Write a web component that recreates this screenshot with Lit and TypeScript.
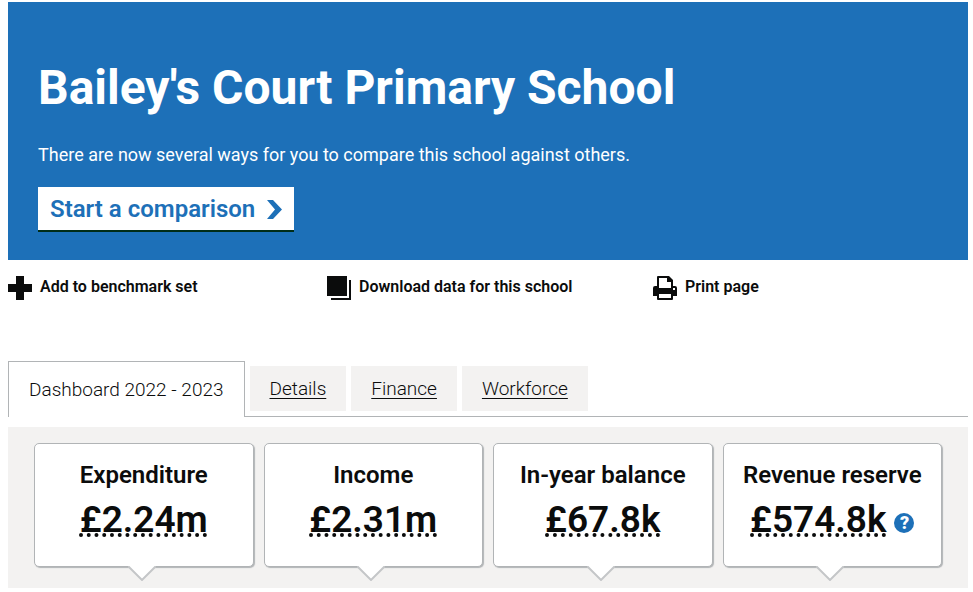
import { LitElement, html, css, svg } from "lit";

const actionIcons = {
  plus: svg`<path d="M8 0h8v8h8v8h-8v8H8v-8H0V8h8z"/>`,
  copy: svg`<path d="M0 0h20v20H0zM22 4h2v20H4v-2h18z"/>`,
  print: svg`<path fill-rule="evenodd" d="M5 0h11l4 4v6h2q2 0 2 2v8h-4v3q0 1-1 1H5q-1 0-1-1v-3H0v-8q0-2 2-2h2V1q0-1 1-1zM6 2v10h12V6h-4V2zM6 18v4h12v-4zM20 12v2h2v-2z"/>`,
};

const actions = [
  { icon: actionIcons.plus, label: "Add to benchmark set" },
  { icon: actionIcons.copy, label: "Download data for this school" },
  { icon: actionIcons.print, label: "Print page" },
];

const tabs = ["Dashboard 2022 - 2023", "Details", "Finance", "Workforce"];

const figures = [
  { title: "Expenditure", value: "£2.24m", help: false },
  { title: "Income", value: "£2.31m", help: false },
  { title: "In-year balance", value: "£67.8k", help: false },
  { title: "Revenue reserve", value: "£574.8k", help: true },
];

class AppRoot extends LitElement {
  static styles = css`
    :host {
      display: block;
      padding: 2px 5px 4px 8px;
      font-family: Roboto, "Liberation Sans", sans-serif;
      color: #0b0c0c;
      background: #fff;
    }
    * {
      box-sizing: border-box;
    }
    h1,
    h2,
    p {
      margin: 0;
    }
    button {
      font: inherit;
      color: inherit;
      border: 0;
      padding: 0;
      background: none;
      cursor: pointer;
    }
    svg {
      display: block;
      flex: none;
      fill: currentColor;
    }
    .banner {
      padding: 61px 30px 28px;
      background: #1d70b8;
      color: #fff;
    }
    h1 {
      font-size: 48px;
      line-height: 50px;
      font-weight: 700;
    }
    .intro {
      margin: 29px 0 20px;
      font-size: 18px;
      line-height: 25px;
    }
    .start {
      display: inline-flex;
      align-items: center;
      gap: 12px;
      padding: 9px 12px 7px;
      background: #fff;
      color: #1d70b8;
      border-bottom: 2px solid #002d18;
      font-size: 24px;
      line-height: 27px;
      font-weight: 600;
      text-decoration: none;
    }
    .actions {
      display: grid;
      grid-template-columns: 319fr 326fr 315fr;
      padding: 16px 0 61px;
    }
    .action {
      display: flex;
      gap: 8px;
      justify-self: start;
      font-size: 16px;
      line-height: 22px;
      font-weight: 600;
    }
    .tabs {
      display: flex;
      align-items: center;
      gap: 5px;
      border-bottom: 1px solid #b1b4b6;
    }
    .tab {
      padding: 10px 20px;
      background: #f3f2f1;
      color: inherit;
      font-size: 19px;
      line-height: 25px;
      font-weight: 300;
      text-underline-offset: 3px;
      text-decoration-thickness: 1px;
    }
    .tab.current {
      margin-bottom: -1px;
      padding: 15px 20px;
      border: 1px solid #b1b4b6;
      border-bottom: 0;
      background: #fff;
      text-decoration: none;
    }
    .panel {
      display: grid;
      grid-template-columns: repeat(4, 1fr);
      gap: 10px;
      margin-top: 10px;
      padding: 16px 26px 21px;
      background: #f3f2f1;
    }
    .card {
      position: relative;
      height: 124px;
      padding-top: 16px;
      border: 1px solid #b1b4b6;
      border-radius: 5px;
      box-shadow: 1px 1px 1px #b1b4b6;
      background: #fff;
      text-align: center;
    }
    .pointer {
      position: absolute;
      top: 100%;
      left: calc(50% - 16px);
    }
    h2 {
      font-size: 24px;
      line-height: 30px;
      font-weight: 600;
    }
    .line {
      display: flex;
      align-items: center;
      justify-content: center;
      gap: 8px;
      margin-top: 8px;
    }
    .value {
      font-size: 37px;
      line-height: 44px;
      font-weight: 600;
      text-decoration: underline dotted 4px;
      text-decoration-skip-ink: none;
      text-underline-offset: 1px;
    }
    .help {
      margin-top: 6px;
      width: 20px;
      height: 20px;
      border-radius: 50%;
      background: #1d70b8;
      color: #fff;
      font-size: 18px;
      line-height: 20px;
      font-weight: 900;
    }
  `;

  render() {
    return html`
      <header class="banner">
        <h1>Bailey's Court Primary School</h1>
        <p class="intro">There are now several ways for you to compare this school against others.</p>
        <a class="start" href="#compare">
          Start a comparison
          <svg width="15" height="19" viewBox="0 0 15 19" aria-hidden="true"><path d="M0 0h6l9 9.5L6 19H0l8-9.5z"/></svg>
        </a>
      </header>
      <div class="actions">
        ${actions.map(
          (a) => html`<button class="action" type="button">
            <svg width="24" height="24" viewBox="0 0 24 24" aria-hidden="true">${a.icon}</svg>${a.label}
          </button>`
        )}
      </div>
      <nav class="tabs">
        ${tabs.map((t, i) => html`<a class="tab ${i === 0 ? "current" : ""}" href="#tab${i}">${t}</a>`)}
      </nav>
      <section class="panel">
        ${figures.map(
          (f) => html`<article class="card">
            <h2>${f.title}</h2>
            <div class="line">
              <span class="value">${f.value}</span>
              ${f.help ? html`<button class="help" type="button" aria-label="About ${f.title}">?</button>` : ""}
            </div>
            <svg class="pointer" width="28" height="15" viewBox="0 0 28 15" aria-hidden="true">
              <path d="M0 0h28L14 14z" fill="#fff"/>
              <path d="M0 0l14 14L28 0" fill="none" stroke="#c4c6c8" stroke-width="2"/>
            </svg>
          </article>`
        )}
      </section>
    `;
  }
}
customElements.define("app-root", AppRoot);
